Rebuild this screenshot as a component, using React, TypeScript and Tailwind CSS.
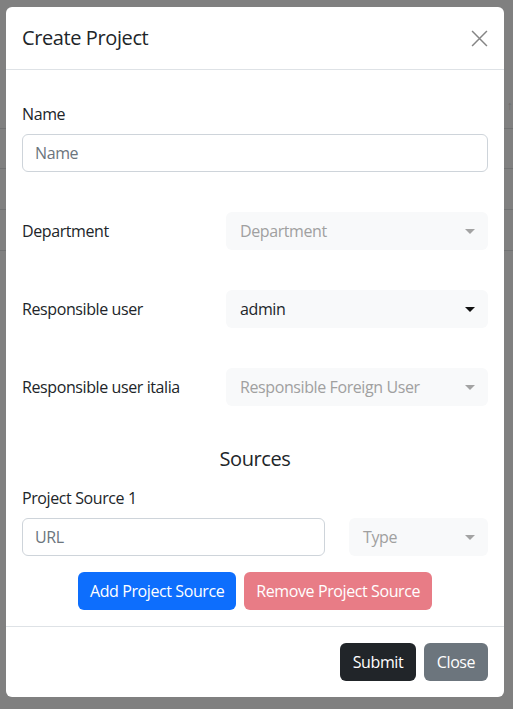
import React from 'react'

const font = { fontFamily: '"Open Sans", "Noto Sans", Arial, sans-serif' }

function Caret({ dark }: { dark?: boolean }) {
  return (
    <span
      className={
        dark
          ? 'h-0 w-0 border-x-[5px] border-t-[5px] border-x-transparent border-t-[#111]'
          : 'h-0 w-0 border-x-[5px] border-t-[5px] border-x-transparent border-t-[#a3a3a3]'
      }
    />
  )
}

function Select({ value, placeholder }: { value?: string; placeholder: string }) {
  return (
    <div className="flex h-[38px] w-full items-center justify-between rounded-[6px] bg-[#f8f9fa] pl-[14px] pr-[13px]">
      {value ? (
        <span className="text-[16px] leading-6 text-[#212529]">{value}</span>
      ) : (
        <span className="text-[16px] leading-6 text-[#a0a0a0]">{placeholder}</span>
      )}
      <Caret dark={!!value} />
    </div>
  )
}

function SelectRow({ label, value, placeholder }: { label: string; value?: string; placeholder: string }) {
  return (
    <div className="mt-10 grid grid-cols-[180px_1fr] items-center gap-x-6">
      <div className="text-[16px] leading-6 text-[#212529]">{label}</div>
      <Select value={value} placeholder={placeholder} />
    </div>
  )
}

export default function App() {
  return (
    <div className="relative min-h-[709px] w-full overflow-hidden bg-[#808080] tracking-[-0.025em]" style={font}>
      {/* page behind the backdrop */}
      <div className="absolute left-0 right-0 top-[128px] h-px bg-[#717273]" />
      <div className="absolute left-0 right-0 top-[168px] h-px bg-[#717273]" />
      <div className="absolute left-0 right-0 top-[209px] h-px bg-[#717273]" />
      <div className="absolute left-0 right-0 top-[250px] h-px bg-[#717273]" />
      <div className="absolute right-[1px] top-[98px] text-[12px] leading-4 text-[#6b6b6b]">↑</div>

      <div className="relative px-[6px] pt-[7px]">
        <div className="w-[498px] rounded-[6px] bg-white text-[#212529]">
          {/* header */}
          <div className="flex items-center justify-between border-b border-[#dee2e6] px-4 py-4">
            <h5 className="text-[20px] font-medium leading-[30px]">Create Project</h5>
            <button className="flex h-[18px] w-[18px] items-center justify-center" aria-label="Close">
              <svg width="17" height="17" viewBox="0 0 16 16" fill="none" stroke="#858585" strokeWidth="1.4">
                <path d="M1 1 15 15M15 1 1 15" />
              </svg>
            </button>
          </div>

          {/* body */}
          <div className="px-4 pb-4 pt-8">
            <label className="mb-2 block text-[16px] leading-6">Name</label>
            <input
              className="block h-[38px] w-full rounded-[6px] border border-[#ced4da] px-3 text-[16px] leading-6 placeholder:text-[#6c757d]"
              placeholder="Name"
            />

            <SelectRow label="Department" placeholder="Department" />
            <SelectRow label="Responsible user" value="admin" placeholder="Responsible user" />
            <SelectRow label="Responsible user italia" placeholder="Responsible Foreign User" />

            <h5 className="mb-[15px] mt-[41px] text-center text-[20px] font-medium leading-6">Sources</h5>
            <label className="mb-2 block text-[16px] leading-6">Project Source 1</label>
            <div className="grid grid-cols-[303px_1fr] gap-x-6">
              <input
                className="block h-[38px] w-full rounded-[6px] border border-[#ced4da] px-3 text-[16px] leading-6 placeholder:text-[#6c757d]"
                placeholder="URL"
              />
              <Select placeholder="Type" />
            </div>

            <div className="mt-4 flex justify-center gap-2">
              <button className="h-[38px] rounded-[6px] bg-[#0d6efd] px-3 text-[16px] leading-6 text-white">
                Add Project Source
              </button>
              <button className="h-[38px] rounded-[6px] bg-[#e87c86] px-3 text-[16px] leading-6 text-white">
                Remove Project Source
              </button>
            </div>
          </div>

          {/* footer */}
          <div className="flex justify-end gap-2 border-t border-[#dee2e6] p-4">
            <button className="h-[38px] w-[76px] rounded-[6px] bg-[#212529] text-[16px] leading-6 text-white">Submit</button>
            <button className="h-[38px] w-[64px] rounded-[6px] bg-[#6c757d] text-[16px] leading-6 text-white">Close</button>
          </div>
        </div>
      </div>
    </div>
  )
}
